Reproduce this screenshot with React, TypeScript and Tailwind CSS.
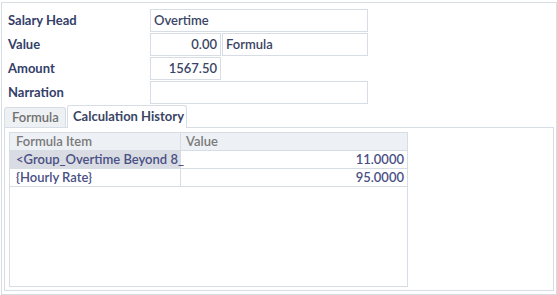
import React from "react";

const font = { fontFamily: "Lato, 'Open Sans', sans-serif" };

function Field({ className, children }: { className?: string; children?: React.ReactNode }) {
    return (
        <div className={`h-[23px] border border-[#d7dde5] bg-white flex items-center text-[13px] font-semibold text-[#3a4565] whitespace-nowrap overflow-hidden ${className ?? ""}`}>
            {children}
        </div>
    );
}

function FormRow({ label, children }: { label: string; children?: React.ReactNode }) {
    return (
        <div className="flex items-center h-[23px]">
            <div className="w-[142px] text-[13px] font-bold text-[#34406a]">{label}</div>
            <div className="flex gap-px">{children}</div>
        </div>
    );
}

const rows = [
    { item: "<Group_Overtime Beyond 8_", value: "11.0000", selected: true },
    { item: "{Hourly Rate}", value: "95.0000", selected: false },
];

export default function App() {
    return (
        <div style={font} className="bg-white w-[557px] h-[295px] pt-[2px] pl-px">
            <div className="w-[556px] h-[293px] border border-[#d7dde5] flex flex-col">
                {/* header form */}
                <div className="pt-[6px] pl-[6px] flex flex-col gap-px">
                    <FormRow label="Salary Head">
                        <Field className="w-[218px] pl-[3px]">Overtime</Field>
                    </FormRow>
                    <FormRow label="Value">
                        <Field className="w-[71px] justify-end pr-[3px]">0.00</Field>
                        <Field className="w-[146px] pl-[3px]">Formula</Field>
                    </FormRow>
                    <FormRow label="Amount">
                        <Field className="w-[71px] justify-end pr-[3px]">1567.50</Field>
                    </FormRow>
                    <FormRow label="Narration">
                        <Field className="w-[218px]" />
                    </FormRow>
                </div>

                {/* tabs */}
                <div className="mt-px ml-[2px] h-[22px] flex items-end gap-px">
                    <div className="h-[20px] w-[62px] border border-b-0 border-[#d7dde5] rounded-t-[3px] bg-[#eef1f4] flex items-center pl-[7px] text-[13px] font-semibold text-[#707070]">
                        Formula
                    </div>
                    <div className="relative z-10 h-[23px] -mb-px w-[120px] border border-b-0 border-[#d7dde5] rounded-t-[3px] bg-white flex items-center pl-[5px] text-[13px] font-bold text-[#3a4565] whitespace-nowrap">
                        Calculation History
                    </div>
                </div>

                {/* tab panel */}
                <div className="flex-1 mx-[2px] mb-[3px] border border-[#d7dde5] flex flex-col">
                    <div className="ml-[4px] mt-[4px] mb-[3px] w-[399px] flex-1 border border-[#d7dde5] bg-white">
                        <div className="flex h-[18px] bg-[#edf0f4] border-b border-[#d7dde5] text-[13px] font-semibold text-[#7a7a7a]">
                            <div className="w-[171px] border-r border-[#d7dde5] pl-[6px] flex items-center">Formula Item</div>
                            <div className="flex-1 pl-[5px] flex items-center">Value</div>
                        </div>
                        {rows.map((r) => (
                            <div key={r.item} className="flex h-[18px] border-b border-[#d7dde5] text-[13px] font-semibold text-[#4a4f85]">
                                <div className={`w-[171px] border-r border-[#d7dde5] pl-[6px] flex items-center whitespace-nowrap ${r.selected ? "bg-[#d9dde3]" : ""}`}>
                                    {r.item}
                                </div>
                                <div className="flex-1 pr-[3px] flex items-center justify-end">{r.value}</div>
                            </div>
                        ))}
                    </div>
                </div>
            </div>
        </div>
    );
}
